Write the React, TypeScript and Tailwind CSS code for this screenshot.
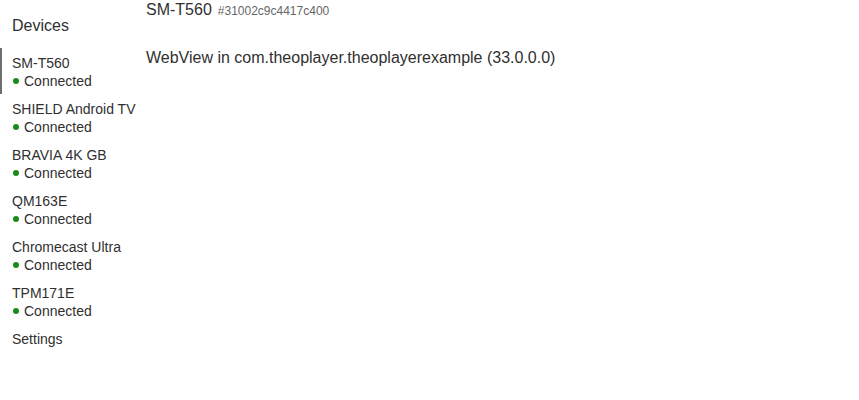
import React from "react";

const devices = [
  "SM-T560",
  "SHIELD Android TV",
  "BRAVIA 4K GB",
  "QM163E",
  "Chromecast Ultra",
  "TPM171E",
];

export default function App() {
  return (
    <div
      className="flex h-[400px] w-[859px] bg-white text-[#303030]"
      style={{ fontFamily: '"Liberation Sans", Arial, sans-serif' }}
    >
      <div className="w-[146px] shrink-0 pt-[1px]">
        <div className="h-[47px] pl-3 pt-[15px] text-[16px] leading-[20px]">Devices</div>
        {devices.map((name, i) => (
          <div
            key={name}
            className={
              "h-[46px] border-l-2 pl-[10px] pt-[6px] text-[14px] leading-[18px] " +
              (i === 0 ? "border-[#6e6e6e]" : "border-transparent")
            }
          >
            <div>{name}</div>
            <div className="flex items-center">
              <span className="ml-[1px] mr-[5px] inline-block h-[6px] w-[6px] rounded-full bg-[#1a8a1a]" />
              Connected
            </div>
          </div>
        ))}
        <div className="pl-3 pt-[6px] text-[14px] leading-[18px]">Settings</div>
      </div>
      <div className="flex-1">
        <div className="flex items-baseline leading-[20px]">
          <span className="text-[16px]">SM-T560</span>
          <span className="ml-[6px] text-[12px] text-[#666]">#31002c9c4417c400</span>
        </div>
        <div className="mt-[27px] text-[16px] leading-[20px]">
          WebView in com.theoplayer.theoplayerexample (33.0.0.0)
        </div>
      </div>
    </div>
  );
}
